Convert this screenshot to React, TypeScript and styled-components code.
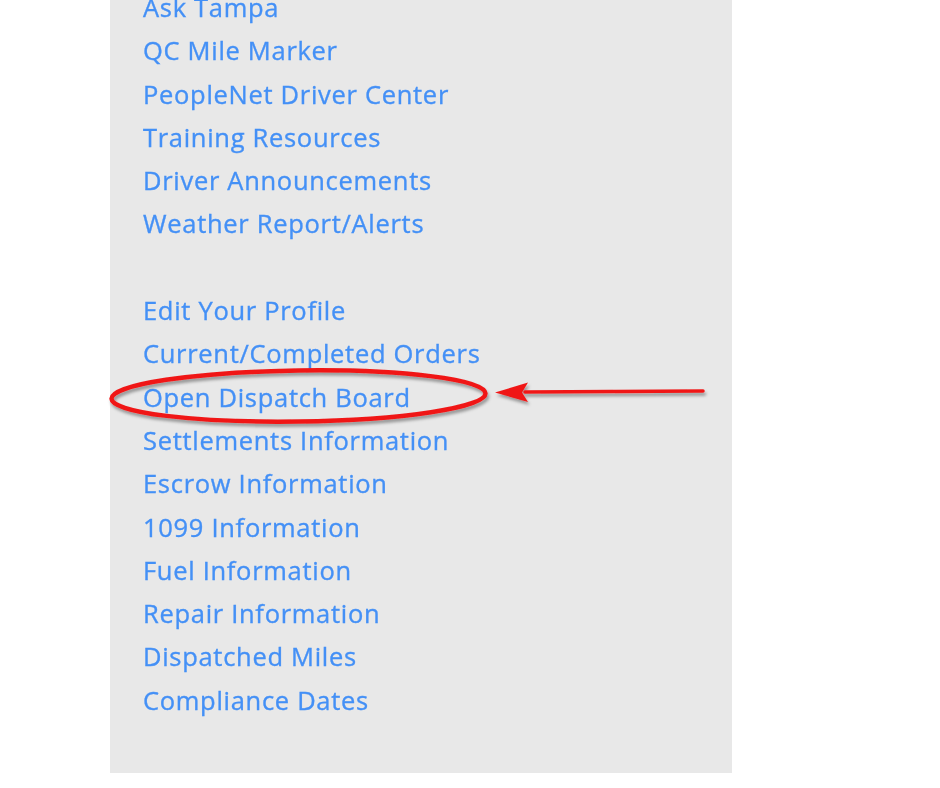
import React from "react";
import styled, { createGlobalStyle } from "styled-components";

const Global = createGlobalStyle`
  html, body { margin: 0; padding: 0; background: #ffffff; }
  body { width: 940px; height: 788px; overflow: hidden; }
`;

const Panel = styled.nav`
  margin-left: 110px;
  margin-top: -14px;
  width: 622px;
  height: 787px;
  background: #e8e8e8;
  box-sizing: border-box;
  padding-left: 33px;
`;

const LinkList = styled.ul`
  list-style: none;
  margin: 0;
  padding: 0;
  display: flex;
  flex-direction: column;
`;

const Item = styled.li`
  position: relative;
  height: 43.3px;
  line-height: 43.3px;
  font-family: "Open Sans", "Noto Sans", sans-serif;
  font-size: 25.5px;
  letter-spacing: 0.7px;
  white-space: nowrap;
`;

const LinkText = styled.a`
  color: #4490f6;
  text-decoration: none;
  filter: blur(0.5px);
  -webkit-text-stroke: 0.35px #4490f6;
`;

const Highlight = styled.svg`
  position: absolute;
  left: -143px;
  top: -376px;
  width: 940px;
  height: 788px;
  overflow: visible;
  pointer-events: none;
`;

const groupA = [
  "Ask Tampa",
  "QC Mile Marker",
  "PeopleNet Driver Center",
  "Training Resources",
  "Driver Announcements",
  "Weather Report/Alerts",
];

const groupB = [
  "Edit Your Profile",
  "Current/Completed Orders",
  "Open Dispatch Board",
  "Settlements Information",
  "Escrow Information",
  "1099 Information",
  "Fuel Information",
  "Repair Information",
  "Dispatched Miles",
  "Compliance Dates",
];

function Annotation() {
  // SVG space matches page coordinates
  return (
    <Highlight viewBox="0 0 940 788">
      <defs>
        <filter id="sh" x="-10%" y="-40%" width="120%" height="180%">
          <feDropShadow dx="1.5" dy="3" stdDeviation="1.8" floodColor="#000" floodOpacity="0.35" />
        </filter>
      </defs>
      <g filter="url(#sh)">
        <ellipse
          cx="298.5"
          cy="396"
          rx="187"
          ry="25.5"
          fill="none"
          stroke="#f01818"
          strokeWidth="4.5"
          transform="rotate(-0.8 298.5 396)"
        />
        <line x1="525" y1="392" x2="703" y2="391" stroke="#f01818" strokeWidth="3.5" strokeLinecap="round" />
        <polygon points="495,392.5 528,382.5 522,392.5 528,402" fill="#f01818" />
      </g>
    </Highlight>
  );
}

export default function App() {
  return (
    <>
      <Global />
      <Panel>
        <LinkList>
          {groupA.map((t) => (
            <Item key={t}>
              <LinkText href="#">{t}</LinkText>
            </Item>
          ))}
          <Item aria-hidden />
          {groupB.map((t) => (
            <Item key={t}>
              <LinkText href="#">{t}</LinkText>
              {t === "Open Dispatch Board" && <Annotation />}
            </Item>
          ))}
        </LinkList>
      </Panel>
    </>
  );
}
